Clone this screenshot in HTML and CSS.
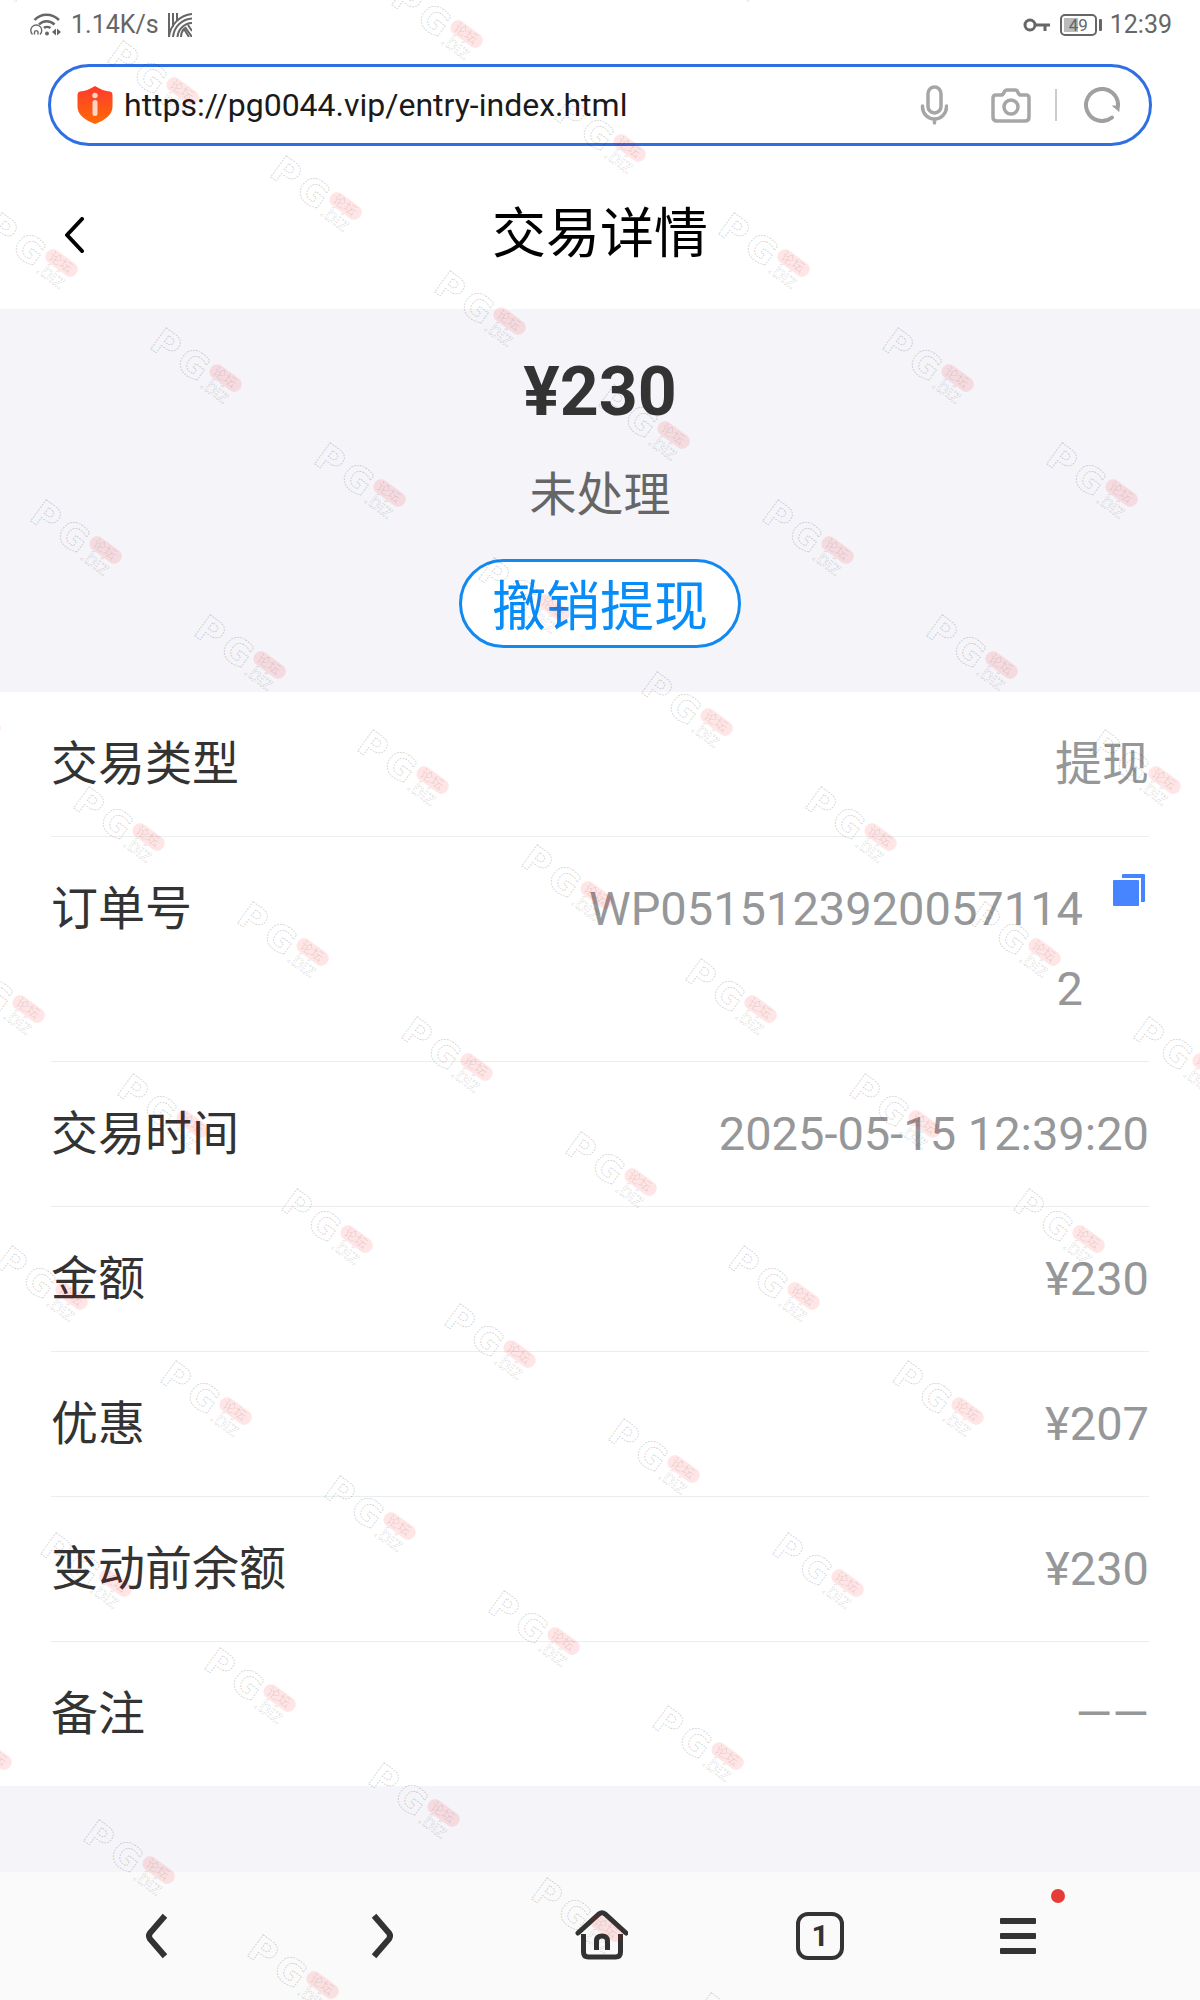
FILE: index.html
```
<!DOCTYPE html>
<html lang="zh-CN">
<head>
    <meta charset="UTF-8">
    <title>交易详情</title>
    <meta name="viewport" content="width=device-width, initial-scale=1">
    <link rel="stylesheet" href="styles.css">
</head>
<body>
    <div class="browser">
        <div class="status">
            <div class="status-side">
                <svg width="32" height="24" viewBox="0 0 32 24" fill="none" stroke="#666" stroke-width="2">
                    <path d="M4.500 7C11 0 22 0 29 7M9 11.500c4-4.500 11-4.500 15.500 0" stroke-width="2.500"/>
                    <path d="M14 15c1.500-1.500 4.500-1.500 6.500 0" stroke-width="2.500"/>
                    <path d="M2.500 21.500a5.500 5.500 0 1 1 7.500 0M4.500 21.500v-2.500a1.800 1.800 0 0 1 3.500 0v2.500" stroke-width="1.400"/>
                    <circle cx="17" cy="20.500" r="2" fill="#666" stroke="none"/>
                    <path d="M22 19l4-3.500v7zM31 19l-4-3.500v7z" fill="#666" stroke="none"/>
                </svg>
                <span>1.14K/s</span>
                <svg width="24" height="24" viewBox="0 0 24 24" fill="none" stroke="#666" stroke-width="2">
                    <path d="M1 0v24M5 0v14M9 0v8M24 1C12 2 2 12 1 24M24 5.500C15 6 6 13 5 24M24 10C17 10 10 16 9.500 24M13 24c0-4 1-6 3-8l5 8M17 14l7 10M20 12l4 6"/>
                </svg>
            </div>
            <div class="status-side">
                <svg width="28" height="16" viewBox="0 0 28 16" fill="none" stroke="#666" stroke-width="3">
                    <circle cx="7" cy="8" r="5"/><path d="M12 8h15M22 8v6"/>
                </svg>
                <span class="battery">49</span>
                <span>12:39</span>
            </div>
        </div>
        <form class="address">
            <svg width="36" height="40" viewBox="0 0 36 40">
                <defs><linearGradient id="shield" x2="0" y2="1"><stop stop-color="#fd3a2d"/><stop offset="1" stop-color="#ff6a05"/></linearGradient></defs>
                <path d="M18 1q8 5 15 5.500 2.500.500 2.500 3v12q0 11-17.500 17.500Q.500 32.500.500 21.500v-12q0-2.500 2.500-3Q10 6 18 1z" fill="url(#shield)"/>
                <circle cx="18" cy="10.500" r="2.700" fill="#ffd5c4"/><rect x="15.500" y="15" width="5" height="16" rx="2.500" fill="#ffd5c4"/>
            </svg>
            <input class="url" type="text" aria-label="网址" value="https://pg0044.vip/entry-index.html">
            <button type="button" aria-label="语音">
                <svg width="28" height="40" viewBox="0 0 28 40" fill="none" stroke="#a6a6a6" stroke-width="3.500" stroke-linecap="round">
                    <rect x="8" y="2" width="13" height="26" rx="6.500"/><path d="M2.500 21v1a12 12 0 0 0 24 0v-1M14.500 34v4"/>
                </svg>
            </button>
            <button type="button" aria-label="拍照">
                <svg width="40" height="36" viewBox="0 0 40 36" fill="none" stroke="#a6a6a6" stroke-width="3.500" stroke-linejoin="round">
                    <path d="M5 8h5q2 0 3-2.500T16 3h8q2 0 3 2.500T30 8h5q3 0 3 3v19q0 4-4 4H6q-4 0-4-4V11q0-3 3-3z"/><circle cx="20" cy="20" r="7"/>
                </svg>
            </button>
            <i class="divider"></i>
            <button type="button" aria-label="刷新">
                <svg width="36" height="36" viewBox="0 0 36 36" fill="none" stroke="#a0a0a0" stroke-width="4" stroke-linecap="round">
                    <path d="M28 30.500A16 16 0 1 1 34 19"/><path d="M29 19h6v5z" fill="#a0a0a0" stroke-width="1"/>
                </svg>
            </button>
        </form>
    </div>
    <header class="header">
        <button type="button" class="back" aria-label="返回">
            <svg width="22" height="36" viewBox="0 0 22 36" fill="none" stroke="#000" stroke-width="4" stroke-linecap="round" stroke-linejoin="round">
                <path d="M18 2L3 18l15 16"/>
            </svg>
        </button>
        <h1 class="title">交易详情</h1>
    </header>
    <section class="summary">
        <div class="amount">¥230</div>
        <div class="state">未处理</div>
        <button type="button" class="cancel">撤销提现</button>
    </section>
    <dl class="list">
        <div class="row"><dt>交易类型</dt><dd>提现</dd></div>
        <div class="row">
            <dt>订单号</dt>
            <dd class="order">WP05151239200571142</dd>
            <dd class="copy">
                <button type="button" aria-label="复制">
                    <svg width="32" height="32" viewBox="0 0 32 32" fill="#4685ff">
                        <path d="M10 0h21q1 0 1 1v26q0 1-1 1h-3V4H9V1q0-1 1-1z"/><rect y="6" width="26" height="26" rx="1"/>
                    </svg>
                </button>
            </dd>
        </div>
        <div class="row"><dt>交易时间</dt><dd>2025-05-15 12:39:20</dd></div>
        <div class="row"><dt>金额</dt><dd>¥230</dd></div>
        <div class="row"><dt>优惠</dt><dd>¥207</dd></div>
        <div class="row"><dt>变动前余额</dt><dd>¥230</dd></div>
        <div class="row"><dt>备注</dt><dd>——</dd></div>
    </dl>
    <nav class="toolbar">
        <button type="button" aria-label="后退">
            <svg width="56" height="64" viewBox="0 0 56 64" fill="none" stroke="#333" stroke-width="6" stroke-linecap="square">
                <path d="M31 14L18 29q-2 3 0 6l13 15"/>
            </svg>
        </button>
        <button type="button" aria-label="前进">
            <svg width="56" height="64" viewBox="0 0 56 64" fill="none" stroke="#333" stroke-width="6" stroke-linecap="square">
                <path d="M24 14l13 15q2 3 0 6L24 50"/>
            </svg>
        </button>
        <button type="button" aria-label="主页">
            <svg width="56" height="64" viewBox="0 0 56 64" fill="none" stroke="#333" stroke-width="5" stroke-linecap="round">
                <path d="M6 29L27 10q3-2.500 6 0l21 19"/>
                <path d="M11.500 30v18q0 5 5 5h27q5 0 5-5V30" stroke-linecap="butt"/>
                <path d="M24.500 46V37q0-5 5.500-5t5.500 5v9" stroke-linecap="butt"/>
            </svg>
        </button>
        <button type="button" class="tabs" aria-label="标签页"><span>1</span></button>
        <button type="button" class="menu" aria-label="菜单">
            <svg width="56" height="64" viewBox="0 0 56 64" fill="#333">
                <rect x="10" y="14" width="36" height="6" rx="1"/><rect x="10" y="29" width="36" height="6" rx="1"/><rect x="10" y="44" width="36" height="6" rx="1"/>
            </svg>
        </button>
    </nav>
    <svg class="watermark" aria-hidden="true">
        <defs>
            <g id="mark">
                <g transform="translate(0 18) rotate(36)">
                    <text class="mark-big" x="2 34" y="1">PG</text>
                    <text class="mark-small" x="66" y="3">.biz</text>
                    <rect x="65" y="-27" width="36" height="15" rx="7" fill="#f00" fill-opacity=".1"/>
                    <text class="mark-cn" x="69" y="-15">论坛</text>
                </g>
            </g>
        </defs>
    </svg>
    <script src="watermark.js"></script>
</body>
</html>
```
FILE: styles.css
```
:root {
    --side: 51px;
    --gray: #f4f4f9;
    --blue: #1389f0;
    --text: #333;
}
* {
    box-sizing: border-box;
}
body {
    position: relative;
    display: flex;
    flex-direction: column;
    min-height: 100vh;
    margin: 0;
    overflow-x: hidden;
    background: var(--gray);
    color: var(--text);
    font-family: Roboto, "Noto Sans CJK SC", sans-serif;
}
button {
    padding: 0;
    border: 0;
    background: none;
    color: inherit;
    font-family: inherit;
    cursor: pointer;
}
svg {
    display: block;
}
.browser {
    background: #fff;
}
.status {
    display: flex;
    justify-content: space-between;
    height: 64px;
    padding: 0 28px 15px 30px;
    color: #666;
    font-size: 25px;
}
.status-side {
    display: flex;
    align-items: center;
    gap: 9px;
}
.battery {
    position: relative;
    width: 37px;
    height: 22px;
    margin-right: 4px;
    border: 2px solid #666;
    border-radius: 5px;
    background: linear-gradient(#bbb, #bbb) 2px 2px / 14px 14px no-repeat;
    font-size: 17px;
    line-height: 18px;
    text-align: center;
}
.battery::after {
    content: "";
    position: absolute;
    top: 3px;
    right: -7px;
    width: 3px;
    height: 12px;
    border-radius: 1px;
    background: #666;
}
.address {
    display: flex;
    align-items: center;
    height: 82px;
    margin: 0 48px;
    padding: 0 29px 0 26px;
    border: 3px solid #2f6fe4;
    border-radius: 41px;
}
.url {
    flex: 1;
    min-width: 0;
    margin: 0 10px 0 11px;
    padding: 0;
    border: 0;
    outline: 0;
    background: none;
    color: #1a1a1a;
    font: 32px Roboto, sans-serif;
}
.address button + button {
    margin-left: 43px;
}
.divider {
    width: 2px;
    height: 32px;
    margin: 0 27px 0 24px;
    background: #ccc;
}
.header {
    display: grid;
    grid-template-columns: 100px 1fr 100px;
    align-items: center;
    height: 163px;
    padding-top: 14px;
    background: #fff;
}
.back {
    justify-self: end;
    margin-right: 14px;
}
.title {
    margin: 0;
    color: #000;
    font-size: 54px;
    font-weight: 400;
    line-height: 80px;
    text-align: center;
}
.summary {
    display: flex;
    flex-direction: column;
    align-items: center;
    height: 383px;
    padding-top: 43px;
}
.amount {
    font-size: 68px;
    font-weight: 700;
    line-height: 80px;
}
.state {
    margin: 31px 0 32px;
    color: #666;
    font-size: 47px;
    line-height: 64px;
}
.cancel {
    width: 282px;
    height: 89px;
    padding-top: 8px;
    border: 3px solid var(--blue);
    border-radius: 45px;
    background: #fff;
    color: #078df9;
    font-size: 54px;
    line-height: 75px;
}
.list {
    margin: 0;
    padding: 0 var(--side);
    background: #fff;
    font-size: 47px;
    line-height: 80px;
}
.row {
    display: flex;
    padding: 32px 0;
    border-bottom: 1px solid #ebeeee;
}
.row:last-child {
    border-bottom: 0;
}
.row dd {
    margin: 0 0 0 auto;
    color: #969799;
    text-align: right;
}
.row .order {
    width: 500px;
    word-break: break-all;
}
.row .copy {
    margin: 5px 4px 0 30px;
}
.copy button {
    display: block;
}
.toolbar {
    display: grid;
    grid-template-columns: repeat(4, 5fr) 4fr;
    align-items: center;
    height: 128px;
    margin-top: auto;
    padding: 0 94px 0 50px;
    background: #fafafa;
}
.toolbar button {
    justify-self: center;
}
.toolbar .tabs {
    width: 48px;
    height: 48px;
    border: 4px solid #333;
    border-radius: 12px;
    font-size: 30px;
    font-weight: 700;
    line-height: 38px;
}
.toolbar .menu {
    position: relative;
}
.menu::after {
    content: "";
    position: absolute;
    top: -15px;
    right: -19px;
    width: 14px;
    height: 14px;
    border-radius: 50%;
    background: #e63c35;
}
.watermark {
    position: absolute;
    top: 0;
    left: 0;
    width: 100%;
    height: 100%;
    overflow: hidden;
    pointer-events: none;
}
.mark-big,
.mark-small {
    fill: none;
    stroke: #000;
    stroke-opacity: .18;
    stroke-dasharray: 2 1;
    font-family: "DejaVu Sans", sans-serif;
}
.mark-big {
    font-size: 36px;
    font-weight: 700;
}
.mark-small {
    font-family: "Liberation Sans", sans-serif;
    font-size: 20px;
    stroke-opacity: .12;
}
.mark-cn {
    fill: #000;
    fill-opacity: .1;
    font-size: 13px;
}
```
FILE: watermark.js
```
// 水印按斜向网格铺满页面
var stepX = 447.9;
var stepY = 57.4;
var period = 732;
var layer = document.querySelector('.watermark');
var width = document.body.clientWidth;
var height = document.body.clientHeight;

for (var row = -7; 327 + row * stepY < height; row++) {
    var y = Math.round(327 + row * stepY);
    // 右侧只在中间一段显示
    var limit = y > 300 && y < 1450 ? width - 40 : width * 2 / 3;
    var start = (147 + row * stepX) % period - period;
    for (var x = start; x < limit; x += period) {
        var mark = document.createElementNS('http://www.w3.org/2000/svg', 'use');
        mark.setAttribute('href', '#mark');
        mark.setAttribute('x', Math.round(x));
        mark.setAttribute('y', y);
        layer.appendChild(mark);
    }
}
```
